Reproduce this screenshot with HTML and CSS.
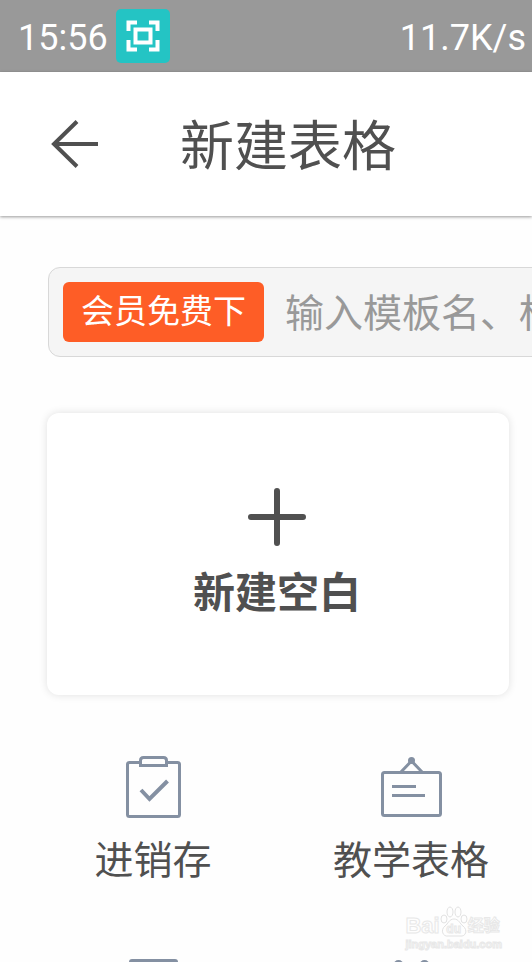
FILE: index.html
```html
<!DOCTYPE html>
<html lang="zh-CN">
  <head>
    <meta charset="utf-8">
    <meta name="viewport" content="width=device-width, initial-scale=1">
    <title>新建表格</title>
    <link rel="stylesheet" href="styles.css">
  </head>
  <body>
    <div class="status-bar">
      <span>15:56</span>
      <svg class="scan-icon" viewBox="0 0 54 54">
        <rect width="54" height="54" rx="5" fill="#24c4c4"/>
        <path d="M12.500 22V13.500H21M33 13.500H41.500V22M41.500 31V40.500H33M21 40.500H12.500V31M19.500 20.500H34.500V33.500H19.500Z" fill="none" stroke="#fff" stroke-width="4"/>
      </svg>
      <span class="speed">11.7K/s</span>
    </div>

    <header class="header">
      <button class="back" aria-label="返回">
        <svg width="48" height="48" viewBox="0 0 48 48">
          <path d="M27 1.500L4 24L27 46.500M3 24H48" fill="none" stroke="#505050" stroke-width="4"/>
        </svg>
      </button>
      <h1>新建表格</h1>
    </header>

    <main>
      <div class="search">
        <label class="badge" for="search">会员免费下</label>
        <input type="text" id="search" placeholder="输入模板名、标">
      </div>

      <button class="blank-card">
        <svg width="60" height="60" viewBox="0 0 60 60">
          <path d="M30 4V56M4 30H56" stroke="#505050" stroke-width="6" stroke-linecap="round"/>
        </svg>
        <span>新建空白</span>
      </button>

      <nav class="categories">
        <a href="#">
          <svg viewBox="0 0 66 66">
            <rect x="7.500" y="9.500" width="52" height="54" rx="2"/>
            <path d="M20.500 12.500V7.500Q20.500 4.500 23.500 4.500H43.500Q46.500 4.500 46.500 7.500V12.500Z"/>
            <path class="check" d="M21 37L29.500 46L47.500 28"/>
          </svg>
          <span>进销存</span>
        </a>
        <a href="#">
          <svg viewBox="0 0 66 66">
            <path d="M22 20L33.500 8L45 20"/>
            <rect x="4.500" y="19.500" width="58" height="43" rx="2"/>
            <path d="M14 33.500H38M14 42.500H47"/>
            <circle class="solid" cx="33.500" cy="7.500" r="3.500"/>
          </svg>
          <span>教学表格</span>
        </a>
        <a href="#">
          <svg viewBox="0 0 66 66">
            <rect class="solid" x="9" y="2" width="49" height="8" rx="3"/>
          </svg>
        </a>
        <a href="#">
          <svg viewBox="0 0 66 66">
            <circle class="solid" cx="20.500" cy="8" r="5"/>
            <circle class="solid" cx="46.500" cy="8" r="5"/>
          </svg>
        </a>
      </nav>
    </main>

    <div class="watermark">
      <div class="brand">
        <span class="latin">Bai</span>
        <span class="paw">
          <svg viewBox="0 0 28 32">
            <ellipse cx="4" cy="13" rx="3" ry="4"/>
            <ellipse cx="10" cy="6" rx="3" ry="5"/>
            <ellipse cx="18" cy="6" rx="3" ry="5"/>
            <ellipse cx="24" cy="13" rx="3" ry="4"/>
            <path d="M14 13C9 13 8 18 5 20C0 24 3 31 8 30H20C26 31 28 24 23 20C20 18 19 13 14 13Z"/>
          </svg>
          <span>du</span>
        </span>
        <span class="hanzi">经验</span>
      </div>
      <div class="domain">jingyan.baidu.com</div>
    </div>
  </body>
</html>
```
FILE: styles.css
```css
* {
  box-sizing: border-box;
}
body {
  margin: 0;
  position: relative;
  height: 100vh;
  overflow: hidden;
  background-color: #fefefe;
  color: #505050;
  font-family: Roboto, "Noto Sans CJK SC", sans-serif;
}
button {
  border: none;
  padding: 0;
  color: inherit;
  font-family: inherit;
  cursor: pointer;
}
.status-bar {
  display: flex;
  align-items: center;
  gap: 8px;
  height: 72px;
  padding: 0 6px 0 18px;
  background-color: #999;
  color: white;
  font-size: 36px;
}
.status-bar span {
  padding-top: 4px;
}
.scan-icon {
  width: 54px;
  height: 54px;
}
.speed {
  margin-left: auto;
}
.header {
  display: flex;
  align-items: center;
  gap: 82px;
  height: 144px;
  padding-left: 50px;
  background-color: white;
  box-shadow: 0 1px 3px rgba(0, 0, 0, 0.4);
}
.back {
  display: flex;
  background: none;
}
h1 {
  margin: 0;
  padding-top: 8px;
  font-size: 54px;
  font-weight: normal;
  line-height: 80px;
}
.search {
  display: flex;
  align-items: center;
  gap: 21px;
  height: 90px;
  margin: 51px -24px 0 48px;
  padding-left: 14px;
  border: 1px solid #d8d8d8;
  border-radius: 12px;
  background-color: #f5f5f5;
}
.badge {
  flex: none;
  padding: 0 18px;
  border-radius: 6px;
  background-color: #fe5d26;
  color: white;
  font-size: 33px;
  line-height: 60px;
}
.search input {
  flex: 1;
  min-width: 0;
  padding: 4px 0 0;
  border: none;
  outline: none;
  background: none;
  font-family: inherit;
  font-size: 39px;
}
.search input::placeholder {
  color: #999;
}
.blank-card {
  display: flex;
  flex-direction: column;
  align-items: center;
  gap: 16px;
  width: calc(100% - 70px);
  height: 282px;
  margin: 56px 23px 0 47px;
  padding: 74px 2px 0 0;
  border-radius: 12px;
  background-color: white;
  box-shadow: 0 0 8px rgba(0, 0, 0, 0.12);
}
.blank-card span {
  font-size: 42px;
  font-weight: bold;
  line-height: 62px;
}
.categories {
  display: grid;
  grid-template-columns: 1fr 1fr;
  row-gap: 67px;
  margin: 58px -8px 0 24px;
}
.categories a {
  display: flex;
  flex-direction: column;
  align-items: center;
  gap: 14px;
  color: inherit;
  font-size: 39px;
  line-height: 57px;
  text-decoration: none;
}
.categories svg {
  width: 66px;
  height: 66px;
  fill: #fefefe;
  stroke: #8490a2;
  stroke-width: 3px;
}
.categories .check {
  fill: none;
  stroke-width: 4px;
}
.categories .solid {
  fill: #8490a2;
  stroke: none;
}
.watermark {
  position: absolute;
  right: 30px;
  bottom: 12px;
  color: #fefefe;
  font-family: "Liberation Sans", "Noto Sans CJK SC", sans-serif;
  font-weight: bold;
  -webkit-text-stroke: 1px #e8e8e8;
}
.brand {
  display: flex;
  align-items: flex-end;
  line-height: 24px;
}
.latin {
  font-size: 22px;
}
.hanzi {
  font-size: 16px;
}
.paw {
  position: relative;
  width: 28px;
  height: 32px;
}
.paw svg {
  width: 28px;
  height: 32px;
  fill: #fefefe;
  stroke: #e2e2e2;
}
.paw span {
  position: absolute;
  left: 0;
  bottom: 0;
  width: 28px;
  font-size: 12px;
  line-height: 18px;
  text-align: center;
}
.domain {
  font-size: 11px;
  line-height: 12px;
}
```
